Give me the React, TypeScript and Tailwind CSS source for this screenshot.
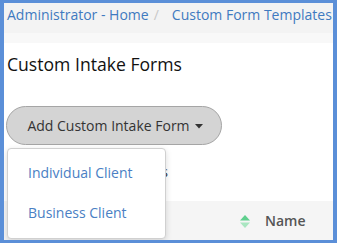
import React from "react";

export default function App() {
  return (
    <div
      className="w-[337px] h-[243px] overflow-hidden bg-[#5b8fd8] pt-[3px] pl-[4px] pr-[4px] pb-[3px]"
      style={{ fontFamily: '"Open Sans", "Noto Sans", sans-serif' }}
    >
      <div className="relative w-full h-full bg-white overflow-hidden">
        {/* breadcrumb */}
        <div className="bg-[#f3f3f3] h-[30px] pt-[2px] pl-[3px] whitespace-nowrap text-[14px] leading-[20px]">
          <span className="text-[#3f7ac0]">Administrator - Home</span>
          <span className="text-[#c8c8c8] pl-[5px] pr-[13px]">/</span>
          <span className="text-[#3f7ac0]">Custom Form Templates</span>
        </div>
        <div className="bg-[#f8f8f8] h-[10px]" />

        {/* title */}
        <div className="pl-[3px] mt-[9px] text-[17.6px] leading-[24px] text-[#111]">
          Custom Intake Forms
        </div>

        {/* button */}
        <div className="pl-[2px] mt-[30px]">
          <button className="h-[39px] w-[216px] rounded-full border border-[#a5a5a5] bg-[#d4d4d4] text-[14px] leading-[20px] text-[#333] flex items-center justify-center gap-[5px] pl-[2px]">
            <span>Add Custom Intake Form</span>
            <svg width="8" height="5" viewBox="0 0 8 5" className="mt-[1px]">
              <path d="M0 0 L8 0 L4 4.5 Z" fill="#333" />
            </svg>
          </button>
        </div>

        {/* text behind dropdown */}
        <div className="w-[164px] mt-[17px] text-right text-[14px] leading-[20px] text-[#333] whitespace-nowrap">
          Show Active Forms
        </div>

        {/* table header */}
        <div className="mt-[19px] h-[40px] bg-[#f5f5f5] flex items-center pl-[236px]">
          <svg width="10" height="13" viewBox="0 0 10 13">
            <path d="M5 0 L10 5.5 L0 5.5 Z" fill="#5fd08e" />
            <path d="M5 13 L10 7.5 L0 7.5 Z" fill="#a9e6c1" />
          </svg>
          <span className="ml-[15px] text-[14px] font-semibold text-[#555] leading-[20px]">
            Name
          </span>
        </div>

        {/* dropdown */}
        <div className="absolute left-[3px] top-[145px] w-[159px] h-[91px] bg-white border border-[#d0d0d0] rounded-[4px] shadow-[0_2px_6px_rgba(0,0,0,0.15)] pt-[4px]">
          <div className="pl-[20px] py-[10px] text-[14px] leading-[20px] text-[#4a80c4]">
            Individual Client
          </div>
          <div className="pl-[20px] py-[10px] text-[14px] leading-[20px] text-[#4a80c4]">
            Business Client
          </div>
        </div>
      </div>
    </div>
  );
}
